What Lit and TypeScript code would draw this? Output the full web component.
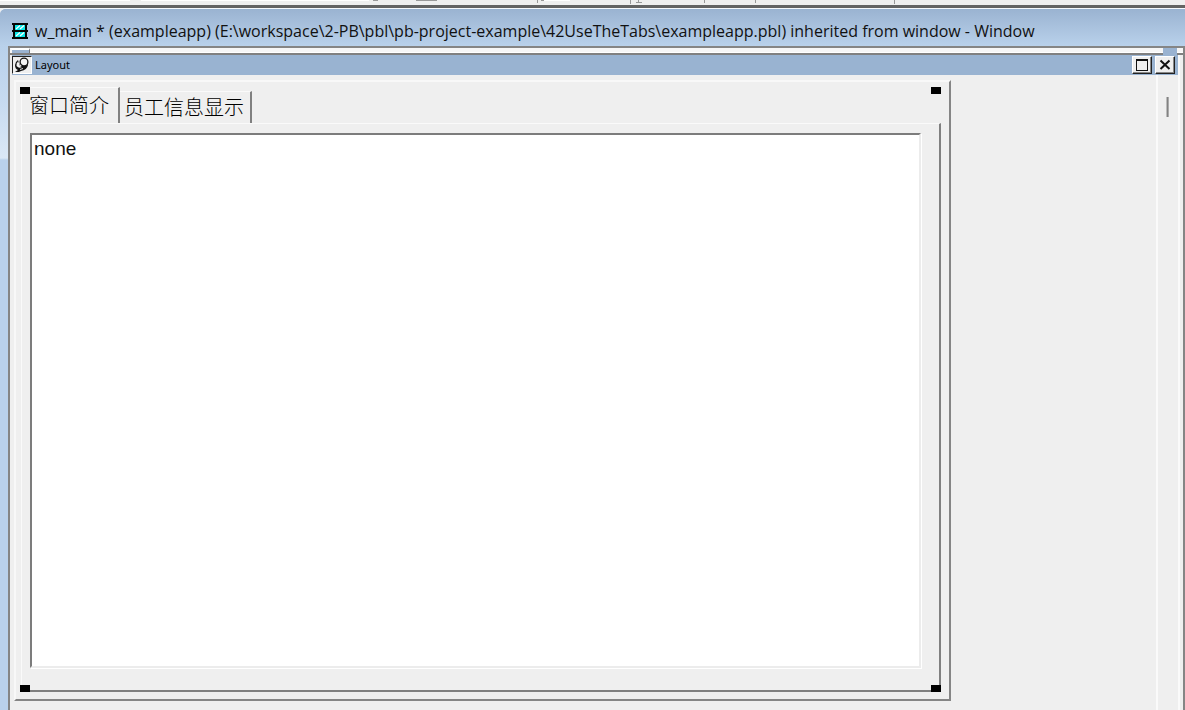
import { LitElement, html, css } from "lit";
import { customElement, state } from "lit/decorators.js";

@customElement("app-root")
export class AppRoot extends LitElement {
  @state() private active = 0;
  private tabs = ["窗口简介", "员工信息显示"];

  static styles = css`
    :host {
      display: flex;
      flex-direction: column;
      height: 100vh;
      box-sizing: border-box;
      overflow: hidden;
      background: #efefef;
      color: #111;
      font-family: "Noto Sans", "Noto Sans CJK SC", sans-serif;
    }
    * { box-sizing: border-box; }
    .toolbar { flex: none; height: 8px; border-bottom: 3px solid #636363; background: #efefef; }
    .toolbar svg { display: block; }
    .window {
      flex: 1;
      min-height: 0;
      display: flex;
      flex-direction: column;
      border-top: 1px solid #f4f8fc;
      border-top-left-radius: 6px;
      background: linear-gradient(#9ab3d1, #b9d1eb 38px, #c6daf0 90px, #dbe8f6 149px, #bad1eb 151px);
    }
    .caption {
      flex: none;
      height: 37px;
      display: flex;
      align-items: center;
      gap: 6px;
      padding: 6px 11px 0;
      background: linear-gradient(#9ab3d1, #b9d1eb);
      border-top-left-radius: 6px;
      font-family: "Open Sans", "Noto Sans", sans-serif;
      font-size: 16px;
      line-height: 20px;
      white-space: nowrap;
    }
    .caption svg { flex: none; }
    .client {
      flex: 1;
      min-height: 0;
      display: flex;
      flex-direction: column;
      margin-left: 8px;
      border: 2px solid #858585;
      border-bottom: 0;
      background: #efefef;
    }
    .splitter {
      flex: none;
      display: flex;
      justify-content: space-between;
      height: 7px;
      background: #f6f6f6;
      border-bottom: 2px solid #808080;
      box-shadow: inset 0 -1px #fff;
    }
    .grip { width: 20px; height: 5px; border-right: 1px solid #777; border-top: 2px solid #fff; border-left: 2px solid #f6f6f6; background: #9ab3d1; }
    .gripend { width: 14px; height: 7px; margin-right: 6px; background: #9ab3d1; }
    .pane {
      flex: 1;
      min-height: 0;
      display: flex;
      flex-direction: column;
      margin: 0 3px 0 2px;
      border-right: 2px solid #fafafa;
    }
    .panebar {
      flex: none;
      height: 20px;
      display: flex;
      align-items: center;
      gap: 3px;
      padding: 1px 3px 1px 0;
      background: #99b3d1;
      font-size: 11px;
      line-height: 16px;
    }
    .panebar h2 { flex: 1; margin: 0; font-size: 11px; font-weight: 400; color: #000; }
    button { font-family: inherit; color: inherit; }
    .box {
      width: 20px;
      height: 18px;
      padding: 0;
      display: grid;
      place-items: center;
      background: #efefef;
      border: 1px solid;
      border-color: #fff #222 #222 #fff;
      box-shadow: inset -1px -1px #888;
    }
    .pin { border-color: #222 #fff #fff #222; box-shadow: none; }
    .workspace { flex: 1; min-height: 0; display: flex; padding-left: 2px; }
    .design { flex: 1; min-width: 0; display: flex; padding: 5px 205px 9px 0; border-right: 2px solid #fafafa; }
    .ruler { flex: none; width: 20px; padding: 22px 0 0 8px; }
    .mark { width: 3px; height: 20px; background: linear-gradient(90deg, #bbb 1px, #828282 1px 2px, #aaa 2px); }
    .form {
      flex: 1;
      min-width: 0;
      display: flex;
      padding: 5px 8px 7px 5px;
      border: 2px solid;
      border-color: #f8f8f8 #858585 #858585 #f8f8f8;
    }
    .tabcontrol { position: relative; flex: 1; min-width: 0; display: flex; flex-direction: column; }
    .tablist { display: flex; align-items: flex-end; height: 36px; }
    .tab {
      height: 32px;
      padding: 0 6px 2px 4px;
      background: #efefef;
      border: 0;
      border-top: 1px solid #fafafa;
      border-right: 2px solid #808080;
      color: #000;
      font: 300 20px/28px "Noto Sans CJK SC", sans-serif;
      white-space: nowrap;
    }
    .tab.active { height: 37px; margin-bottom: -1px; padding: 0 9px 3px 7px; border-left: 1px solid #fafafa; }
    .page {
      flex: 1;
      min-height: 0;
      display: flex;
      padding: 9px 18px 22px 8px;
      border: 1px solid #fafafa;
      border-right: 2px solid #808080;
      border-bottom: 2px solid #808080;
    }
    .editor {
      flex: 1;
      min-width: 0;
      margin: 0;
      padding: 3px 2px;
      resize: none;
      outline: none;
      border-radius: 0;
      border: 2px solid;
      border-color: #7c7c7c #ececec #ececec #7c7c7c;
      box-shadow: 1px 1px #fff;
      background: #fff;
      color: #111;
      font: 19px/22px "Liberation Sans", sans-serif;
    }
    .handle { position: absolute; width: 10px; height: 7px; background: #000; }
    .tl { left: -1px; top: 0; }
    .tr { right: 0; top: 0; }
    .bl { left: -1px; bottom: 0; }
    .br { right: 0; bottom: 0; }
  `;

  render() {
    return html`
      <div class="toolbar">
        <svg width="900" height="5" shape-rendering="crispEdges" aria-hidden="true">
          <path d="M0 0.5H130M141 0.5H369M541 0.5H570" stroke="#fff" />
          <path d="M373 .5H378M416 .5H437M537.5 0V3M541 .5H544M630.5 0V4M704.5 0V3M755.5 0V3M894.5 0V4M636 2.5H642M638.5 0V2" stroke="#999" fill="none" />
        </svg>
      </div>
      <main class="window">
        <header class="caption">
          <svg width="18" height="16" viewBox="0 0 18 16" aria-hidden="true">
            <path d="M1 0H17V2H1ZM1 7H17V9H1ZM1 14H17V16H1ZM2 2H4V14H2ZM14 2H16V14H14Z" fill="#050505" />
            <path d="M4 2H14V7H4ZM4 9H14V14H4Z" fill="#08e5e8" />
            <path d="M5 6L9 2.500M9 6L13 2.500M5 13L9 9.500M9 13L13 9.500" stroke="#fff" stroke-width="1.2" />
          </svg>
          <span>w_main * (exampleapp) (E:\\workspace\\2-PB\\pbl\\pb-project-example\\42UseTheTabs\\exampleapp.pbl) inherited from window - Window</span>
        </header>
        <div class="client">
          <div class="splitter"><span class="grip"></span><span class="gripend"></span></div>
          <section class="pane">
            <div class="panebar">
              <button class="box pin" aria-label="Pin">
                <svg width="18" height="16" viewBox="0 0 18 16" aria-hidden="true">
                  <path d="M5 3Q2 5 2 8Q2 12 5 13L2 15H6L8 14Q14 13 15 8V4L12 9L7 9Z" fill="#111" />
                  <path d="M5 4.500Q3 6 3.500 9Q6 12 9 10Q6 9 6 6Z" fill="#f4f4f4" />
                  <circle cx="11" cy="5" r="3.900" fill="#f4f4f4" stroke="#111" stroke-width="1.300" />
                  <path d="M7 12.500L10 11.500" stroke="#ddd" />
                </svg>
              </button>
              <h2>Layout</h2>
              <button class="box" aria-label="Maximize">
                <svg width="12" height="12" shape-rendering="crispEdges" aria-hidden="true"><path d="M0.500 1V11.500H11.500V1" fill="none" stroke="#111" /><path d="M0 0H12V2H0Z" fill="#111" /></svg>
              </button>
              <button class="box" aria-label="Close">
                <svg width="12" height="12" aria-hidden="true"><path d="M1.500 1.500L10.500 10M10.500 1.500L1.500 10" stroke="#111" stroke-width="2" /></svg>
              </button>
            </div>
            <div class="workspace">
              <div class="design">
                <div class="form">
                  <div class="tabcontrol">
                    <div class="tablist" role="tablist">
                      ${this.tabs.map((t, i) => html`
                        <button class="tab ${i === this.active ? "active" : ""}" role="tab"
                          aria-selected=${i === this.active} @click=${() => (this.active = i)}>${t}</button>`)}
                    </div>
                    <div class="page" role="tabpanel">
                      <textarea class="editor" aria-label="窗口简介" spellcheck="false" .value=${"none"}></textarea>
                    </div>
                    <span class="handle tl"></span><span class="handle tr"></span>
                    <span class="handle bl"></span><span class="handle br"></span>
                  </div>
                </div>
              </div>
              <div class="ruler"><div class="mark"></div></div>
            </div>
          </section>
        </div>
      </main>
    `;
  }
}
